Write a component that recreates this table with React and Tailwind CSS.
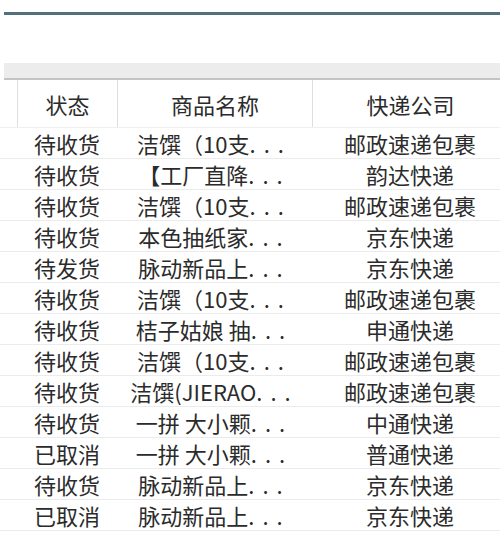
import React from 'react'

const rows = [
  ['待收货', '洁馔（10支', '邮政速递包裹'],
  ['待收货', '【工厂直降', '韵达快递'],
  ['待收货', '洁馔（10支', '邮政速递包裹'],
  ['待收货', '本色抽纸家', '京东快递'],
  ['待发货', '脉动新品上', '京东快递'],
  ['待收货', '洁馔（10支', '邮政速递包裹'],
  ['待收货', '桔子姑娘 抽', '申通快递'],
  ['待收货', '洁馔（10支', '邮政速递包裹'],
  ['待收货', '洁馔(JIERAO', '邮政速递包裹'],
  ['待收货', '一拼 大小颗', '中通快递'],
  ['已取消', '一拼 大小颗', '普通快递'],
  ['待收货', '脉动新品上', '京东快递'],
  ['已取消', '脉动新品上', '京东快递'],
]

export default function App() {
  return (
    <div
      className="w-[500px] h-[545px] bg-white overflow-hidden text-[#2b2b2b] text-[22px]"
      style={{ fontFamily: '"Noto Sans CJK SC", "Noto Sans", sans-serif' }}
    >
      {/* top rule */}
      <div className="pt-[12px] pl-[4px]">
        <div className="h-[3px] bg-[#52707c]" />
      </div>

      {/* toolbar band */}
      <div className="mt-[48px] pl-[4px]">
        <div className="h-[15px] bg-[#ececec]" />
        <div className="h-[2px] bg-[#c4c4c4]" />
      </div>

      {/* header */}
      <div className="grid grid-cols-[17px_100px_195px_196px] h-[47px] items-stretch">
        <div />
        <div className="border-l border-[#dedede] flex items-center justify-center leading-none">状态</div>
        <div className="border-l border-[#dedede] flex items-center justify-center leading-none">商品名称</div>
        <div className="border-l border-[#dedede] flex items-center justify-center leading-none">快递公司</div>
      </div>

      {/* body */}
      <div className="border-t border-[#f0f0f0]">
        {rows.map((r, i) => (
          <div
            key={i}
            className="grid grid-cols-[17px_100px_195px_196px] h-[31px] border-b border-[#ebebeb] items-center leading-none"
          >
            <div />
            <div className="text-center">{r[0]}</div>
            <div className="text-center whitespace-nowrap">
              {r[1]}
              <span className="tracking-[8px]">...</span>
            </div>
            <div className="text-center">{r[2]}</div>
          </div>
        ))}
      </div>
    </div>
  )
}
